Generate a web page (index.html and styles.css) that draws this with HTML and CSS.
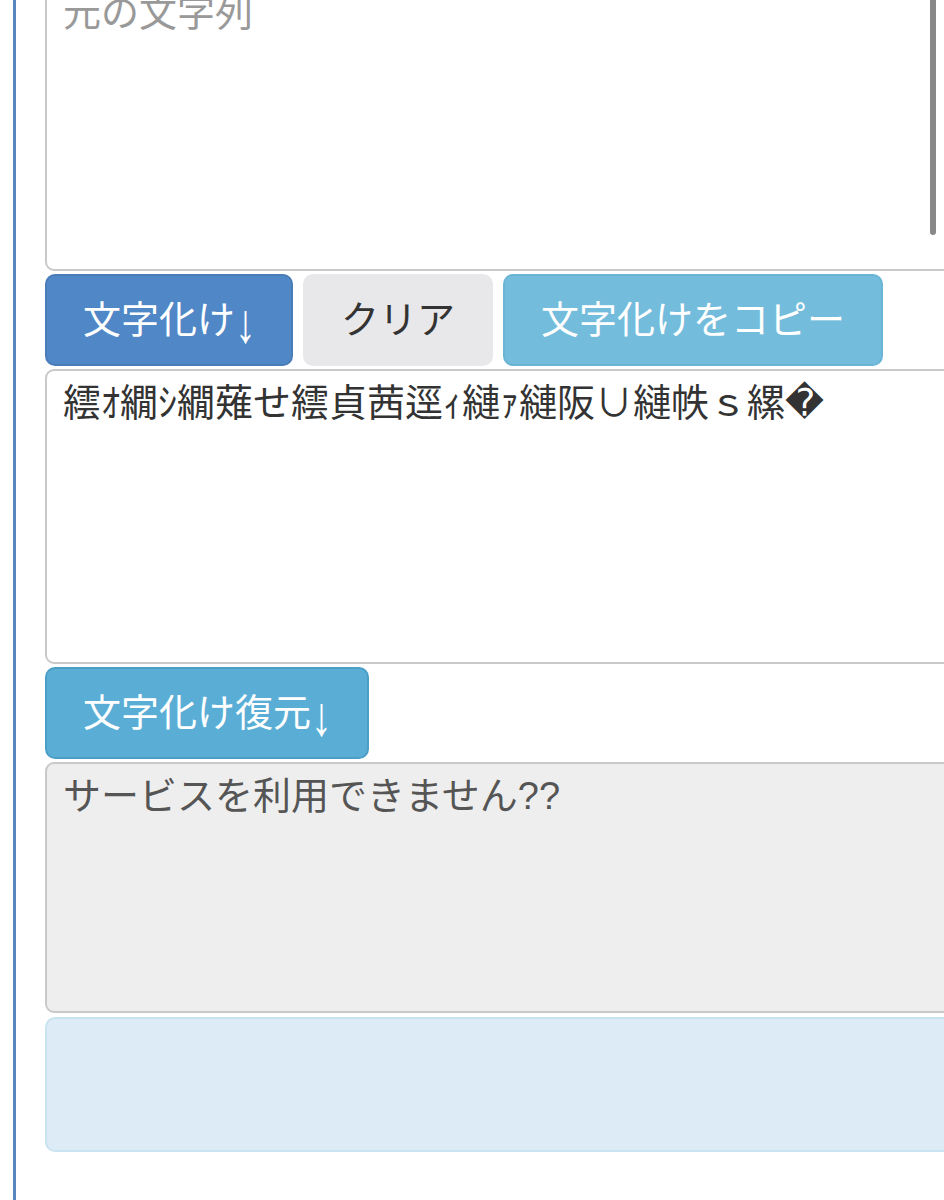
FILE: index.html
```html
<!DOCTYPE html>
<html lang="ja">
<head>
    <meta charset="UTF-8">
    <meta name="viewport" content="width=device-width, initial-scale=1.0">
    <title>文字化け</title>
    <link rel="stylesheet" href="styles.css">
</head>
<body>
    <div class="page">
        <div class="panel">
            <div class="field">
                <textarea class="box box-source" placeholder="元の文字列"></textarea>
                <span class="scroll-thumb"></span>
            </div>
            <div class="actions">
                <button class="btn btn-primary" type="button">文字化け<span class="arrow">↓</span></button>
                <button class="btn btn-default" type="button">クリア</button>
                <button class="btn btn-info" type="button">文字化けをコピー</button>
            </div>
            <textarea class="box box-garbled">繧ｵ繝ｼ繝薙せ繧貞茜逕ｨ縺ｧ縺阪∪縺帙ｓ縲�</textarea>
            <div class="actions">
                <button class="btn btn-restore" type="button">文字化け復元<span class="arrow">↓</span></button>
            </div>
            <textarea class="box box-result" readonly>サービスを利用できません??</textarea>
            <div class="alert"></div>
        </div>
    </div>
</body>
</html>
```

FILE: styles.css
```css
html, body {
    margin: 0;
    overflow: hidden;
    background-color: #fff;
}
body {
    font-family: "Liberation Sans", "Noto Sans CJK JP", "DejaVu Sans", sans-serif;
    font-size: 38px;
    color: #333;
}
.page {
    margin-top: -21px;
}
.panel {
    display: flex;
    flex-direction: column;
    gap: 3px;
    margin-left: 13px;
    padding-left: 29px;
    border-left: 3px solid #5a86c0;
    width: 910px;
    min-height: 1260px;
}
.field {
    position: relative;
}
.box {
    display: block;
    box-sizing: border-box;
    width: 100%;
    margin: 0;
    padding: 10px 16px;
    border: 2px solid #c9c9c9;
    border-radius: 9px;
    font-family: inherit;
    font-size: 38px;
    line-height: 1.2;
    color: #333;
    background-color: #fff;
    resize: none;
    outline: none;
}
.box::placeholder {
    color: #999;
}
.box-source { height: 292px; }
.box-garbled { height: 295px; }
.box-result {
    height: 251px;
    background-color: #eee;
    color: #555;
}
.scroll-thumb {
    position: absolute;
    top: 8px;
    bottom: 36px;
    right: 19px;
    width: 6px;
    border-radius: 3px;
    background-color: #888;
}
.actions {
    display: flex;
    gap: 10px;
}
.btn {
    box-sizing: border-box;
    height: 92px;
    padding: 16px 36px;
    border: 2px solid transparent;
    border-radius: 10px;
    font-family: inherit;
    font-size: 38px;
    line-height: 54px;
    cursor: pointer;
}
.arrow {
    display: inline-block;
    margin-left: 1px;
    transform: translateY(3px) scale(1.1, 1.45);
}
.btn-primary { background-color: #5087c6; border-color: #4a7db8; color: #fff; }
.btn-default { background-color: #e8e8ea; border-color: #e8e8ea; color: #333; }
.btn-info { background-color: #74bcdc; border-color: #6ab4d6; color: #fff; }
.btn-restore { background-color: #5aaed6; border-color: #4a9fc7; color: #fff; }
.alert {
    margin-top: 1px;
    height: 135px;
    box-sizing: border-box;
    background-color: #dcebf6;
    border: 2px solid #c8e4f0;
    border-radius: 10px;
}
```
